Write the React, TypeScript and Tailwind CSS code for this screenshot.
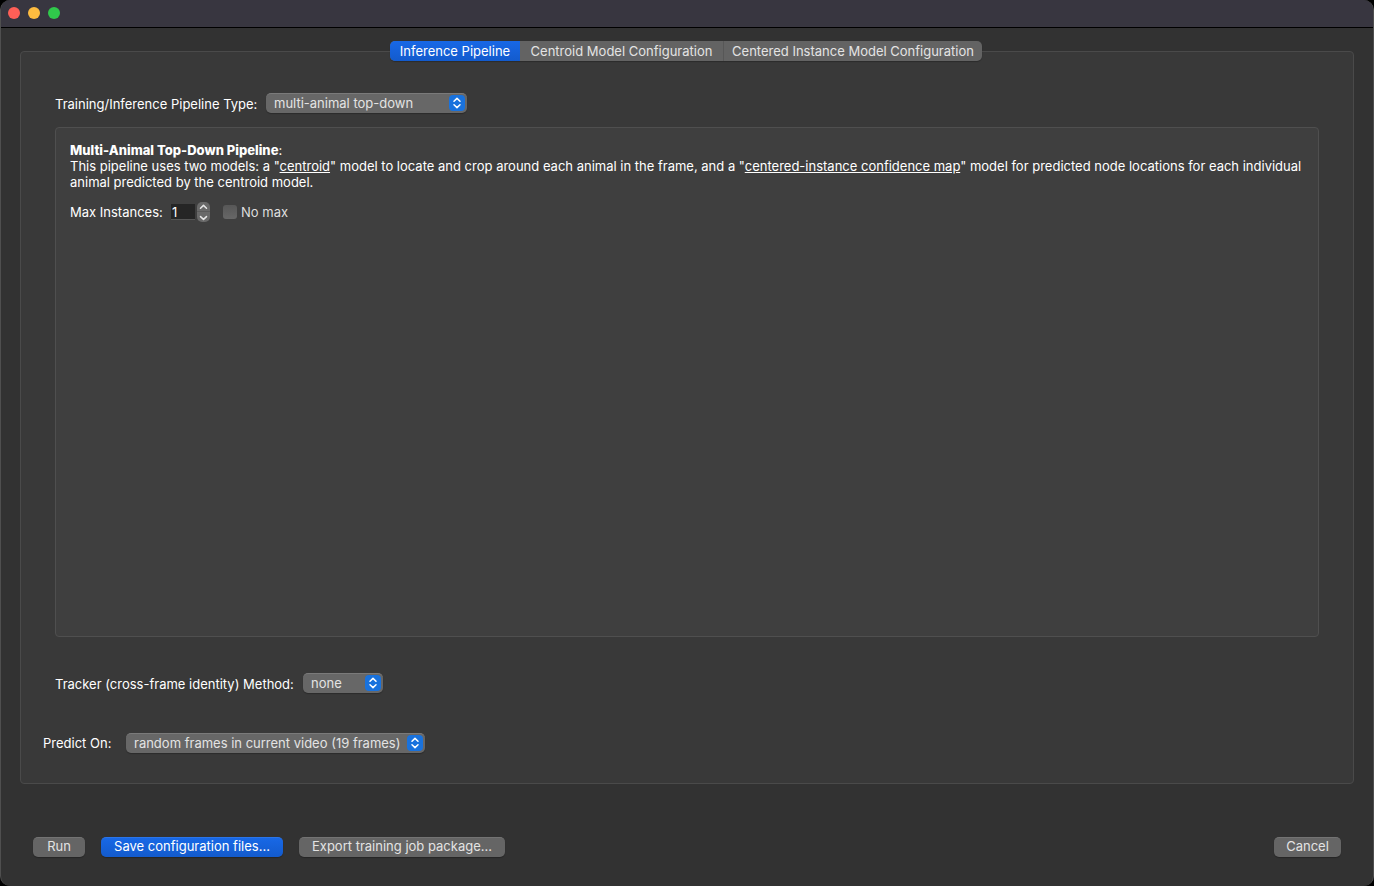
import React, { useState } from 'react';
import clsx from 'clsx';

const TABS = ['Inference Pipeline', 'Centroid Model Configuration', 'Centered Instance Model Configuration'];

// Widths of the three segments, in tab order
const TAB_WIDTHS = ['w-[130px]', 'w-[203px]', 'w-[259px]'];

interface PopupSelectProps {
  id: string;
  options: string[];
  className: string;
}

const PopupSelect: React.FC<PopupSelectProps> = ({ id, options, className }) => (
  <div className={clsx('relative h-5', className)}>
    <select
      id={id}
      className="block h-5 w-full appearance-none rounded-[5px] border-t border-[#7a7a7a] bg-[#676767] pr-5 pb-px pl-2 leading-4 text-[#e3e3e3] shadow-[0_1px_1px_rgba(0,0,0,0.25)] outline-none"
    >
      {options.map((option) => (
        <option key={option}>{option}</option>
      ))}
    </select>
    {/* Blue up/down badge over the right edge */}
    <svg className="pointer-events-none absolute top-0.5 right-0.5 h-4 w-4" viewBox="0 0 16 16" fill="none">
      <rect width="16" height="16" rx="4" fill="#1972dd" />
      <path d="M5 6.2 8 3.4l3 2.8M5 9.8l3 2.8 3-2.8" stroke="#fff" strokeWidth="1.5" strokeLinecap="round" strokeLinejoin="round" />
    </svg>
  </div>
);

interface PushButtonProps {
  children: React.ReactNode;
  primary?: boolean;
  className: string;
}

const PushButton: React.FC<PushButtonProps> = ({ children, primary, className }) => (
  <button
    type="button"
    className={clsx(
      'h-5 rounded-[5px] border-t pb-[3px] text-center leading-4 whitespace-nowrap shadow-[0_1px_1px_rgba(0,0,0,0.25)]',
      primary
        ? 'border-[#2a75ea] bg-linear-to-b from-[#1868e6] to-[#135bcd] text-white'
        : 'border-[#737373] bg-[#656565] text-[#e3e3e3]',
      className,
    )}
  >
    {children}
  </button>
);

const App: React.FC = () => {
  const [tab, setTab] = useState(0);
  const [maxInstances, setMaxInstances] = useState(1);

  return (
    <div className="min-h-screen bg-black font-['Inter','Liberation_Sans',sans-serif] text-[13px] leading-4 font-normal text-white">
      <div className="flex min-h-screen flex-col overflow-hidden rounded-[10px] border-x border-[#4f4f4f] bg-[#323232]">
        {/* Title bar */}
        <header className="flex h-7 shrink-0 items-center gap-2 border-b border-black bg-[#383640] px-[7px] pb-px">
          <button type="button" aria-label="Close" className="h-3 w-3 rounded-full bg-[#ff5f57]" />
          <button type="button" aria-label="Minimize" className="h-3 w-3 rounded-full bg-[#febc40]" />
          <button type="button" aria-label="Zoom" className="h-3 w-3 rounded-full bg-[#30c94b]" />
        </header>

        <main className="flex flex-1 flex-col px-[19px] pt-[13px]">
          <div role="tablist" className="z-10 mr-0.5 flex h-5 self-center overflow-hidden rounded-[5px] bg-[#636363] shadow-[0_1px_1px_rgba(0,0,0,0.25)]">
            {TABS.map((label, i) => (
              <button
                key={label}
                type="button"
                role="tab"
                aria-selected={tab === i}
                onClick={() => setTab(i)}
                className={clsx(
                  'text-center leading-5 whitespace-nowrap',
                  TAB_WIDTHS[i],
                  i === 2 && 'border-l border-[#575757]',
                  tab === i ? 'bg-linear-to-b from-[#1868e6] to-[#135bcd] text-white' : 'text-[#e3e3e3]',
                )}
              >
                {label}
              </button>
            ))}
          </div>

          {/* Tab pane, its top edge runs behind the segmented control */}
          <section className="-mt-[10px] flex flex-1 flex-col rounded-sm border border-[#4a4a4a] bg-[#393939] px-[34px] pt-[41px] pb-[30px]">
            <div className="flex">
              <label htmlFor="pipeline" className="w-[211px] pt-[3px] whitespace-nowrap">Training/Inference Pipeline Type:</label>
              <PopupSelect id="pipeline" options={['multi-animal top-down']} className="w-[201px]" />
            </div>

            <div className="mt-[14px] flex-1 rounded-sm border border-[#4f4f4f] bg-[#3f3f3f] p-[14px]">
              <h2><b className="font-extrabold">Multi-Animal Top-Down Pipeline</b>:</h2>
              <p>
                This pipeline uses two models: a "<a href="#centroid" className="underline">centroid</a>" model to locate and crop
                around each animal in the frame, and a "<a href="#centered-instance" className="underline">centered-instance confidence map</a>"
                model for predicted node locations for each individual animal predicted by the centroid model.
              </p>

              <div className="mt-3 flex h-5 items-center">
                <label htmlFor="max-instances" className="w-[101px] whitespace-nowrap">Max Instances:</label>
                <input
                  id="max-instances"
                  type="text"
                  value={maxInstances}
                  onChange={(e) => setMaxInstances(Number(e.target.value) || 0)}
                  className="h-4 w-6 border-b border-[#555555] bg-[#252525] pl-px text-white outline-none"
                />
                <div className="ml-0.5 flex h-5 w-[13px] flex-col overflow-hidden rounded-[5px] bg-[#696969]">
                  <button type="button" aria-label="Increase" onClick={() => setMaxInstances(maxInstances + 1)} className="h-[10px] border-b border-[#5a5a5a]">
                    <svg className="block h-[9px] w-[13px]" viewBox="0 0 13 9" fill="none">
                      <path d="M3.5 6.2 6.5 3.4l3 2.8" stroke="#e6e6e6" strokeWidth="1.5" strokeLinecap="round" strokeLinejoin="round" />
                    </svg>
                  </button>
                  <button type="button" aria-label="Decrease" onClick={() => setMaxInstances(Math.max(1, maxInstances - 1))} className="h-[10px]">
                    <svg className="block h-[9px] w-[13px]" viewBox="0 0 13 9" fill="none">
                      <path d="M3.5 3.6l3 2.8 3-2.8" stroke="#e6e6e6" strokeWidth="1.5" strokeLinecap="round" strokeLinejoin="round" />
                    </svg>
                  </button>
                </div>
                <input
                  id="no-max"
                  type="checkbox"
                  className="ml-[13px] h-[14px] w-[14px] appearance-none rounded-[3px] bg-linear-to-b from-[#575757] to-[#676767] checked:from-[#1868e6] checked:to-[#135bcd]"
                />
                <label htmlFor="no-max" className="ml-1 text-[#dedede]">No max</label>
              </div>
            </div>

            <div className="mt-9 flex">
              <label htmlFor="tracker" className="w-[248px] pt-[3px] whitespace-nowrap">Tracker (cross-frame identity) Method:</label>
              <PopupSelect id="tracker" options={['none']} className="w-20" />
            </div>

            <div className="mt-10 -ml-3 flex">
              <label htmlFor="predict-on" className="w-[83px] pt-0.5 whitespace-nowrap">Predict On:</label>
              <PopupSelect id="predict-on" options={['random frames in current video (19 frames)']} className="w-[299px]" />
            </div>
          </section>
        </main>

        <footer className="flex gap-4 px-8 pt-[53px] pb-[29px]">
          <PushButton className="w-[52px]">Run</PushButton>
          <PushButton primary className="w-[182px]">Save configuration files...</PushButton>
          <PushButton className="w-[206px]">Export training job package...</PushButton>
          <PushButton className="ml-auto w-[67px]">Cancel</PushButton>
        </footer>
      </div>
    </div>
  );
};

export default App;
